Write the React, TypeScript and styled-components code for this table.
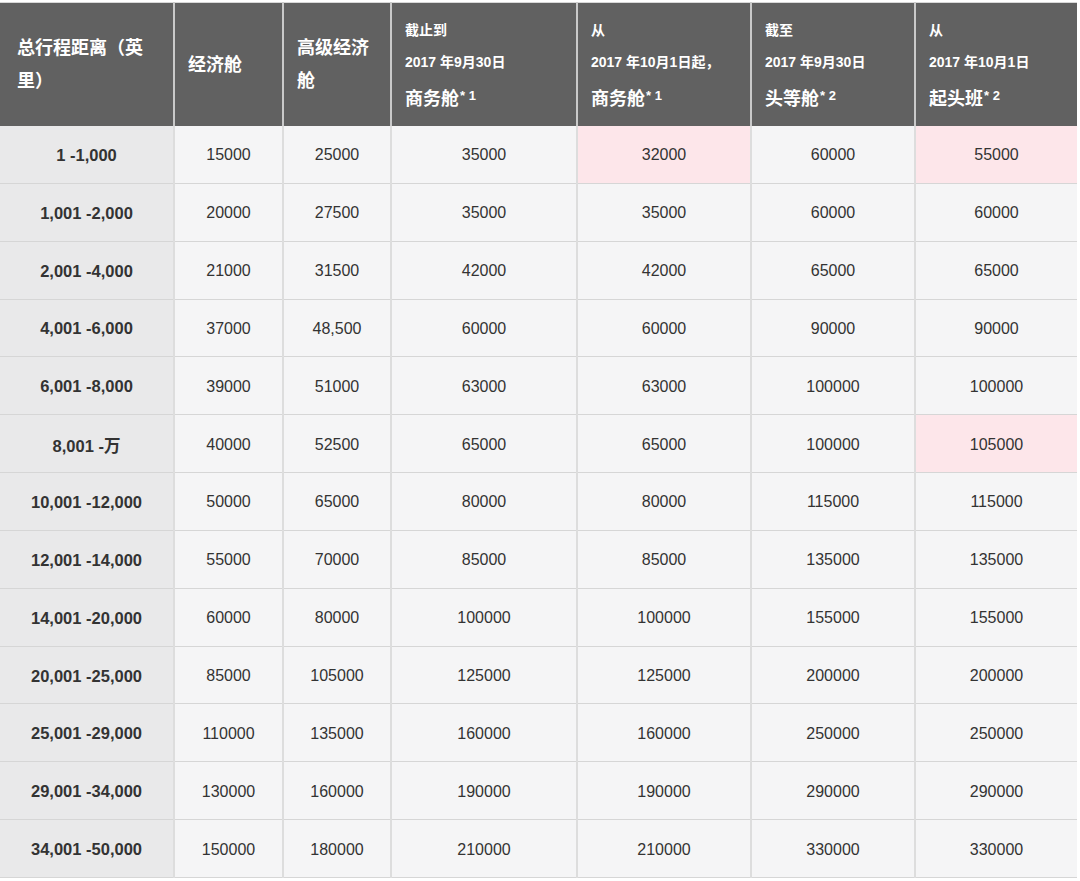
import { createGlobalStyle } from "styled-components";
import styled from "styled-components";

const GlobalStyle = createGlobalStyle`
  html, body {
    margin: 0;
    padding: 0;
    background: #ffffff;
  }
  body {
    font-family: "Liberation Sans", "Noto Sans CJK SC", sans-serif;
    color: #333;
  }
`;

interface headInfo {
  pre?: string;
  date?: string;
  title: string;
  note?: string;
}

const heads: Array<headInfo> = [
  { title: "总行程距离（英里）" },
  { title: "经济舱" },
  { title: "高级经济舱" },
  { pre: "截止到", date: "2017 年9月30日", title: "商务舱", note: "* 1" },
  { pre: "从", date: "2017 年10月1日起，", title: "商务舱", note: "* 1" },
  { pre: "截至", date: "2017 年9月30日", title: "头等舱", note: "* 2" },
  { pre: "从", date: "2017 年10月1日", title: "起头班", note: "* 2" },
];

const widths = [174, 109, 108, 186, 174, 164, 162];

const rows: Array<Array<string>> = [
  ["1 -1,000", "15000", "25000", "35000", "32000", "60000", "55000"],
  ["1,001 -2,000", "20000", "27500", "35000", "35000", "60000", "60000"],
  ["2,001 -4,000", "21000", "31500", "42000", "42000", "65000", "65000"],
  ["4,001 -6,000", "37000", "48,500", "60000", "60000", "90000", "90000"],
  ["6,001 -8,000", "39000", "51000", "63000", "63000", "100000", "100000"],
  ["8,001 -万", "40000", "52500", "65000", "65000", "100000", "105000"],
  ["10,001 -12,000", "50000", "65000", "80000", "80000", "115000", "115000"],
  ["12,001 -14,000", "55000", "70000", "85000", "85000", "135000", "135000"],
  ["14,001 -20,000", "60000", "80000", "100000", "100000", "155000", "155000"],
  ["20,001 -25,000", "85000", "105000", "125000", "125000", "200000", "200000"],
  ["25,001 -29,000", "110000", "135000", "160000", "160000", "250000", "250000"],
  ["29,001 -34,000", "130000", "160000", "190000", "190000", "290000", "290000"],
  ["34,001 -50,000", "150000", "180000", "210000", "210000", "330000", "330000"],
];

// cells highlighted in pink: [row, col]
const marked = ["0-4", "0-6", "5-6"];

function App() {
  return (
    <>
      <GlobalStyle />
      <StyledWrap>
        <StyledTable>
          <colgroup>
            {widths.map((w, i) => (
              <col key={i} style={{ width: w }} />
            ))}
          </colgroup>
          <thead>
            <StyledHeadRow>
              {heads.map((h, i) => (
                <StyledTh key={i} $first={i === 0}>
                  {h.pre && <StyledSmallLine>{h.pre}</StyledSmallLine>}
                  {h.date && <StyledSmallLine>{h.date}</StyledSmallLine>}
                  <StyledTitle $stacked={!!h.pre}>
                    {h.title}
                    {h.note && <StyledSup>{h.note}</StyledSup>}
                  </StyledTitle>
                </StyledTh>
              ))}
            </StyledHeadRow>
          </thead>
          <tbody>
            {rows.map((r, ri) => (
              <StyledRow key={ri}>
                {r.map((v, ci) =>
                  ci === 0 ? (
                    <StyledRangeTd key={ci}>{v}</StyledRangeTd>
                  ) : (
                    <StyledTd key={ci} $pink={marked.includes(`${ri}-${ci}`)}>
                      {v}
                    </StyledTd>
                  )
                )}
              </StyledRow>
            ))}
          </tbody>
        </StyledTable>
      </StyledWrap>
    </>
  );
}
export default App;

const StyledWrap = styled.div`
  width: 1080px;
  padding-top: 2px;
`;

const StyledTable = styled.table`
  width: 1077px;
  table-layout: fixed;
  border-collapse: collapse;
  border-top: 1px solid #d8d8d8;
`;

const StyledHeadRow = styled.tr`
  height: 123px;
  background: #616161;
`;

const StyledTh = styled.th<{ $first?: boolean }>`
  padding: 2px ${p => (p.$first ? "17px" : "13px")} 0;
  text-align: left;
  vertical-align: middle;
  color: #ffffff;
  font-weight: bold;
  border-right: 2px solid #c9c9c9;
  &:last-child {
    border-right: none;
  }
`;

const StyledSmallLine = styled.div`
  font-size: 14px;
  line-height: 32px;
`;

const StyledTitle = styled.div<{ $stacked?: boolean }>`
  font-size: 18px;
  line-height: ${p => (p.$stacked ? "36px" : "33px")};
`;

const StyledSup = styled.span`
  font-size: 13px;
  vertical-align: 5px;
  margin-left: 1px;
`;

const StyledRow = styled.tr`
  height: 57.85px;
`;

const StyledTd = styled.td<{ $pink?: boolean }>`
  background: ${p => (p.$pink ? "#fde6ea" : "#f5f5f6")};
  text-align: center;
  vertical-align: middle;
  font-size: 16px;
  color: #333333;
  border-right: 2px solid #dddddd;
  border-bottom: 1px solid #d6d6d6;
  padding: 2px 0 0;
  &:last-child {
    border-right: none;
  }
`;

const StyledRangeTd = styled.td`
  background: #e9e9ea;
  text-align: center;
  vertical-align: middle;
  font-size: 16.5px;
  font-weight: bold;
  color: #333333;
  border-right: 2px solid #dddddd;
  border-bottom: 1px solid #d6d6d6;
  padding: 2px 0 0;
`;
